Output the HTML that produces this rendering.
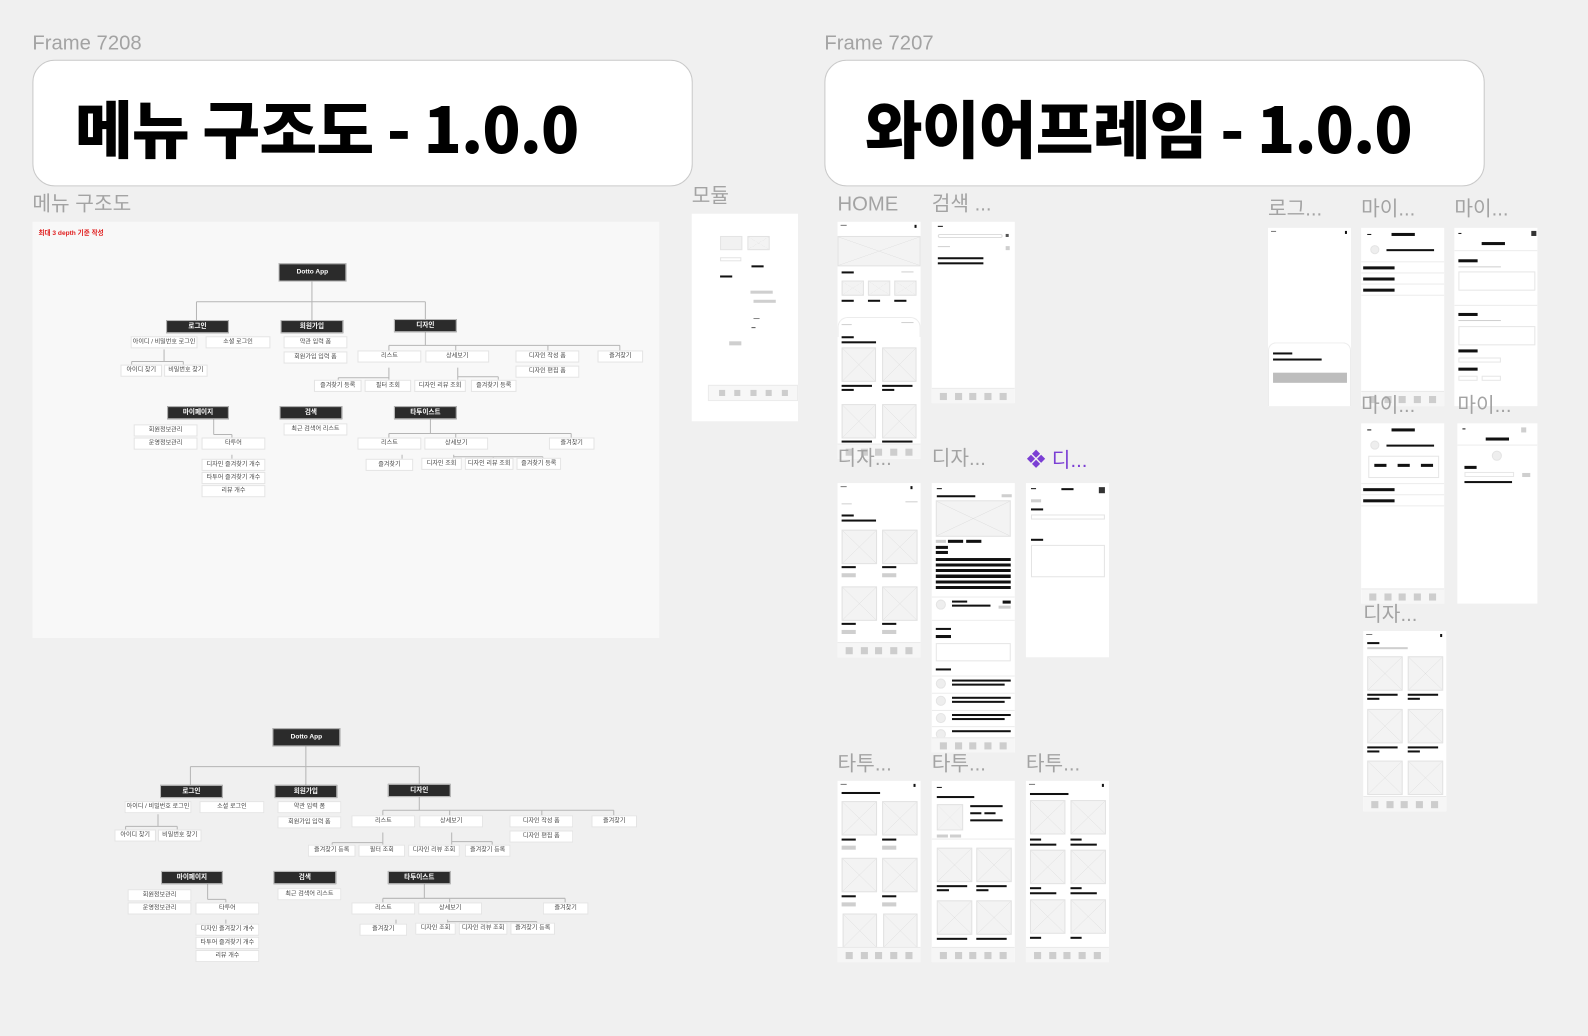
<!DOCTYPE html>
<html><head><meta charset="utf-8">
<style>
*{margin:0;padding:0;box-sizing:border-box}
body{width:1588px;height:1036px;background:#f0f0f0;position:relative;overflow:hidden;font-family:"Liberation Sans","Noto Sans CJK KR",sans-serif}
#wrap{position:absolute;left:0;top:0;width:1568px;height:1023px;transform:scale(1.01276);transform-origin:0 0}
.a{position:absolute}
.lbl{position:absolute;font-size:20px;color:#a3a3a3;white-space:nowrap;line-height:1}
.card{position:absolute;background:#fff;border:1px solid #c9c9c9;border-radius:22px}
.title{position:absolute;font-family:"Noto Sans CJK KR","Liberation Sans",sans-serif;font-weight:900;font-size:62px;color:#000;line-height:1;white-space:nowrap;letter-spacing:-0.8px}
.ph{position:absolute;background:#fff;overflow:hidden}
.b{position:absolute;background:#111;height:3px}
.g{position:absolute;background:#cfcfcf;height:2px}
.x{position:absolute;background:#f3f3f3;border:1px solid #e2e2e2;background-image:linear-gradient(to top right,transparent 49.3%,#dcdcdc 50%,transparent 50.7%),linear-gradient(to bottom right,transparent 49.3%,#dcdcdc 50%,transparent 50.7%)}
.nav{position:absolute;left:0;right:0;bottom:0;height:15px;background:#f6f6f6;border-top:1px solid #eaeaea;display:flex;justify-content:space-evenly;align-items:center}
.nav i{display:block;width:7px;height:7px;background:#cdcdcd}
.hl{position:absolute;left:0;right:0;height:1px;background:#ececec}
.av{position:absolute;border-radius:50%;background:#eee;border:1px solid #e4e4e4}
.dk{position:absolute;background:#2b2b2b;color:#fff;font-size:6.5px;font-weight:700;text-align:center;line-height:12px;height:13px;border:1px solid #bbb}
.wb{position:absolute;background:#fff;color:#444;font-size:6px;text-align:center;line-height:11px;height:12px;border:1px solid #e4e4e4;white-space:nowrap;overflow:hidden}
.dia{position:absolute;left:0;top:0;width:1588px;height:520px}
</style></head><body><div id="wrap">

<div class="lbl" style="left:32px;top:33px">Frame 7208</div>
<div class="lbl" style="left:814px;top:33px">Frame 7207</div>

<div class="card" style="left:32px;top:59px;width:652px;height:125px"></div>
<div class="title" style="left:74px;top:93px">메뉴 구조도 - 1.0.0</div>
<div class="card" style="left:814px;top:59px;width:652px;height:125px"></div>
<div class="title" style="left:854px;top:93px">와이어프레임 - 1.0.0</div>

<div class="lbl" style="left:32px;top:192px">메뉴 구조도</div>
<div class="a" style="left:32px;top:219px;width:619px;height:411px;background:#f8f8f8"></div>

<div class="dia" id="d1">
<div class="a" style="left:38px;top:224px;font-size:6.5px;color:#e02020;font-weight:700">최대 3 depth 기준 작성</div>
<svg class="a" style="left:0;top:0" width="700" height="520" fill="none" stroke="#b5b5b5" stroke-width="1">
<path d="M308 277V298M194 298H420M194 298V317M308 298V317M420 298V315"/>
<path d="M162 345V357M130 357H181M130 357V366M181 357V366"/>
<path d="M420 327V341M384 341H612M384 341V352M450 341V352M541 341V352M612 341V352"/>
<path d="M384 363V381M334 373H384M334 373V381"/>
<path d="M452 363V377M452 372H492M492 372V381"/>
<path d="M211 413V429M211 429H229M229 429V438M229 449V459"/>
<path d="M425 413V428M384 428H564M384 428V438M450 428V438M564 428V438"/>
<path d="M397 449V456M448 449V454M448 451H536M487 451V454M536 451V454"/>
</svg>
<div class="dk" style="left:275px;top:260px;width:67px;height:18px;line-height:16px">Dotto App</div>
<div class="dk" style="left:164px;top:316px;width:62px">로그인</div>
<div class="dk" style="left:277px;top:316px;width:62px">회원가입</div>
<div class="dk" style="left:389px;top:315px;width:62px">디자인</div>
<div class="dk" style="left:165px;top:401px;width:61px">마이페이지</div>
<div class="dk" style="left:276px;top:401px;width:62px">검색</div>
<div class="dk" style="left:389px;top:401px;width:62px">타투이스트</div>
<div class="wb" style="left:129px;top:332px;width:66px">아이디 / 비밀번호 로그인</div>
<div class="wb" style="left:203px;top:332px;width:64px">소셜 로그인</div>
<div class="wb" style="left:119px;top:360px;width:41px">아이디 찾기</div>
<div class="wb" style="left:162px;top:360px;width:43px">비밀번호 찾기</div>
<div class="wb" style="left:280px;top:332px;width:63px">약관 입력 폼</div>
<div class="wb" style="left:280px;top:347px;width:63px">회원가입 입력 폼</div>
<div class="wb" style="left:353px;top:346px;width:63px">리스트</div>
<div class="wb" style="left:420px;top:346px;width:63px">상세보기</div>
<div class="wb" style="left:509px;top:346px;width:63px">디자인 작성 폼</div>
<div class="wb" style="left:509px;top:361px;width:63px">디자인 편집 폼</div>
<div class="wb" style="left:590px;top:346px;width:45px">즐겨찾기</div>
<div class="wb" style="left:310px;top:375px;width:47px">즐겨찾기 등록</div>
<div class="wb" style="left:360px;top:375px;width:46px">필터 조회</div>
<div class="wb" style="left:409px;top:375px;width:51px">디자인 리뷰 조회</div>
<div class="wb" style="left:465px;top:375px;width:45px">즐겨찾기 등록</div>
<div class="wb" style="left:132px;top:419px;width:63px">회원정보관리</div>
<div class="wb" style="left:132px;top:432px;width:63px">운영정보관리</div>
<div class="wb" style="left:199px;top:432px;width:63px">타투어</div>
<div class="wb" style="left:199px;top:453px;width:63px">디자인 즐겨찾기 개수</div>
<div class="wb" style="left:199px;top:466px;width:63px">타투어 즐겨찾기 개수</div>
<div class="wb" style="left:199px;top:479px;width:63px">리뷰 개수</div>
<div class="wb" style="left:280px;top:418px;width:63px">최근 검색어 리스트</div>
<div class="wb" style="left:353px;top:432px;width:63px">리스트</div>
<div class="wb" style="left:419px;top:432px;width:63px">상세보기</div>
<div class="wb" style="left:542px;top:432px;width:45px">즐겨찾기</div>
<div class="wb" style="left:361px;top:453px;width:47px">즐겨찾기</div>
<div class="wb" style="left:416px;top:452px;width:40px">디자인 조회</div>
<div class="wb" style="left:459px;top:452px;width:48px">디자인 리뷰 조회</div>
<div class="wb" style="left:510px;top:452px;width:44px">즐겨찾기 등록</div>
</div>

<div class="dia" style="transform:translate(-6px,459px)">
<svg class="a" style="left:0;top:0" width="700" height="520" fill="none" stroke="#b5b5b5" stroke-width="1">
<path d="M308 277V298M194 298H420M194 298V317M308 298V317M420 298V315"/>
<path d="M162 345V357M130 357H181M130 357V366M181 357V366"/>
<path d="M420 327V341M384 341H612M384 341V352M450 341V352M541 341V352M612 341V352"/>
<path d="M384 363V381M334 373H384M334 373V381"/>
<path d="M452 363V377M452 372H492M492 372V381"/>
<path d="M211 413V429M211 429H229M229 429V438M229 449V459"/>
<path d="M425 413V428M384 428H564M384 428V438M450 428V438M564 428V438"/>
<path d="M397 449V456M448 449V454M448 451H536M487 451V454M536 451V454"/>
</svg>
<div class="dk" style="left:275px;top:260px;width:67px;height:18px;line-height:16px">Dotto App</div>
<div class="dk" style="left:164px;top:316px;width:62px">로그인</div>
<div class="dk" style="left:277px;top:316px;width:62px">회원가입</div>
<div class="dk" style="left:389px;top:315px;width:62px">디자인</div>
<div class="dk" style="left:165px;top:401px;width:61px">마이페이지</div>
<div class="dk" style="left:276px;top:401px;width:62px">검색</div>
<div class="dk" style="left:389px;top:401px;width:62px">타투이스트</div>
<div class="wb" style="left:129px;top:332px;width:66px">아이디 / 비밀번호 로그인</div>
<div class="wb" style="left:203px;top:332px;width:64px">소셜 로그인</div>
<div class="wb" style="left:119px;top:360px;width:41px">아이디 찾기</div>
<div class="wb" style="left:162px;top:360px;width:43px">비밀번호 찾기</div>
<div class="wb" style="left:280px;top:332px;width:63px">약관 입력 폼</div>
<div class="wb" style="left:280px;top:347px;width:63px">회원가입 입력 폼</div>
<div class="wb" style="left:353px;top:346px;width:63px">리스트</div>
<div class="wb" style="left:420px;top:346px;width:63px">상세보기</div>
<div class="wb" style="left:509px;top:346px;width:63px">디자인 작성 폼</div>
<div class="wb" style="left:509px;top:361px;width:63px">디자인 편집 폼</div>
<div class="wb" style="left:590px;top:346px;width:45px">즐겨찾기</div>
<div class="wb" style="left:310px;top:375px;width:47px">즐겨찾기 등록</div>
<div class="wb" style="left:360px;top:375px;width:46px">필터 조회</div>
<div class="wb" style="left:409px;top:375px;width:51px">디자인 리뷰 조회</div>
<div class="wb" style="left:465px;top:375px;width:45px">즐겨찾기 등록</div>
<div class="wb" style="left:132px;top:419px;width:63px">회원정보관리</div>
<div class="wb" style="left:132px;top:432px;width:63px">운영정보관리</div>
<div class="wb" style="left:199px;top:432px;width:63px">타투어</div>
<div class="wb" style="left:199px;top:453px;width:63px">디자인 즐겨찾기 개수</div>
<div class="wb" style="left:199px;top:466px;width:63px">타투어 즐겨찾기 개수</div>
<div class="wb" style="left:199px;top:479px;width:63px">리뷰 개수</div>
<div class="wb" style="left:280px;top:418px;width:63px">최근 검색어 리스트</div>
<div class="wb" style="left:353px;top:432px;width:63px">리스트</div>
<div class="wb" style="left:419px;top:432px;width:63px">상세보기</div>
<div class="wb" style="left:542px;top:432px;width:45px">즐겨찾기</div>
<div class="wb" style="left:361px;top:453px;width:47px">즐겨찾기</div>
<div class="wb" style="left:416px;top:452px;width:40px">디자인 조회</div>
<div class="wb" style="left:459px;top:452px;width:48px">디자인 리뷰 조회</div>
<div class="wb" style="left:510px;top:452px;width:44px">즐겨찾기 등록</div>
</div>

<div class="lbl" style="left:683px;top:184px">모듈</div>
<div class="ph" style="left:683px;top:211px;width:105px;height:205px">
 <div class="a" style="left:28px;top:22px;width:22px;height:14px;background:#f1f1f1;border:1px solid #e4e4e4"></div>
 <div class="x" style="left:55px;top:22px;width:22px;height:14px"></div>
 <div class="a" style="left:28px;top:43px;width:21px;height:4px;border:1px solid #e4e4e4"></div>
 <div class="b" style="left:59px;top:51px;width:12px;height:2px"></div>
 <div class="b" style="left:28px;top:61px;width:12px;height:2px"></div>
 <div class="g" style="left:58px;top:76px;width:22px;height:3px"></div>
 <div class="g" style="left:61px;top:85px;width:22px;height:3px"></div>
 <div class="g" style="left:61px;top:103px;width:6px;height:1px;background:#888"></div>
 <div class="g" style="left:59px;top:112px;width:4px;height:1px;background:#555"></div>
 <div class="g" style="left:37px;top:126px;width:12px;height:4px"></div>
 <div class="a" style="left:16px;top:169px;width:89px;height:16px;background:#f7f7f7;border:1px solid #ebebeb;display:flex;justify-content:space-evenly;align-items:center"><i style="width:6px;height:6px;background:#cdcdcd"></i><i style="width:6px;height:6px;background:#cdcdcd"></i><i style="width:6px;height:6px;background:#cdcdcd"></i><i style="width:6px;height:6px;background:#cdcdcd"></i><i style="width:6px;height:6px;background:#cdcdcd"></i></div>
</div>

<div class="lbl" style="left:827px;top:192px">HOME</div>
<div class="ph" style="left:827px;top:219px;width:82px;height:234px">
 <div class="g" style="left:3px;top:3px;width:6px;height:1px;background:#777"></div>
 <div class="b" style="left:76px;top:3px;width:2px;height:3px"></div>
 <div class="x" style="left:0;top:14px;width:82px;height:30px"></div>
 <div class="b" style="left:4px;top:49px;width:12px;height:2px"></div>
 <div class="g" style="left:63px;top:49px;width:12px;height:1px"></div>
 <div class="x" style="left:4px;top:58px;width:22px;height:15px"></div>
 <div class="x" style="left:30px;top:58px;width:22px;height:15px"></div>
 <div class="x" style="left:56px;top:58px;width:22px;height:15px"></div>
 <div class="b" style="left:4px;top:77px;width:12px;height:2px"></div>
 <div class="b" style="left:30px;top:77px;width:12px;height:2px"></div>
 <div class="b" style="left:56px;top:77px;width:12px;height:2px"></div>
 <div class="a" style="left:0;top:94px;width:82px;height:20px;border:1px solid #ececec;border-bottom:none;border-radius:10px 10px 0 0"></div>
 <div class="g" style="left:4px;top:101px;width:10px;height:1px"></div>
 <div class="g" style="left:63px;top:99px;width:12px;height:1px"></div>
 <div class="b" style="left:4px;top:113px;width:12px;height:2px"></div>
 <div class="b" style="left:4px;top:118px;width:34px;height:2px"></div>
 <div class="x" style="left:4px;top:124px;width:34px;height:34px"></div>
 <div class="x" style="left:44px;top:124px;width:34px;height:34px"></div>
 <div class="b" style="left:4px;top:161px;width:30px;height:2px"></div>
 <div class="b" style="left:44px;top:161px;width:30px;height:2px"></div>
 <div class="b" style="left:4px;top:165px;width:12px;height:2px"></div>
 <div class="b" style="left:44px;top:165px;width:12px;height:2px"></div>
 <div class="x" style="left:4px;top:180px;width:34px;height:34px"></div>
 <div class="x" style="left:44px;top:180px;width:34px;height:34px"></div>
 <div class="b" style="left:4px;top:216px;width:30px;height:2px"></div>
 <div class="b" style="left:44px;top:216px;width:30px;height:2px"></div>
 <div class="nav"><i></i><i></i><i></i><i></i><i></i></div>
</div>

<div class="lbl" style="left:920px;top:192px">검색 ...</div>
<div class="ph" style="left:920px;top:219px;width:82px;height:179px">
 <div class="b" style="left:6px;top:4px;width:5px;height:1px"></div>
 <div class="a" style="left:6px;top:12px;width:64px;height:4px;border:1px solid #ddd;border-radius:2px"></div>
 <div class="b" style="left:73px;top:12px;width:3px;height:3px;background:#555"></div>
 <div class="g" style="left:6px;top:24px;width:12px;height:1px"></div>
 <div class="g" style="left:73px;top:24px;width:4px;height:4px"></div>
 <div class="b" style="left:6px;top:35px;width:45px;height:2px"></div>
 <div class="b" style="left:6px;top:40px;width:45px;height:2px"></div>
 <div class="nav"><i></i><i></i><i></i><i></i><i></i></div>
</div>

<div class="lbl" style="left:827px;top:443px">디자...</div>
<div class="lbl" style="left:920px;top:443px">디자...</div>
<div class="lbl" style="left:1013px;top:443px;color:#7b3fd4">
 <svg width="20" height="20" viewBox="0 0 20 20" style="vertical-align:-2px"><g fill="#7b3fd4"><path d="M10 1l4 4-4 4-4-4z"/><path d="M10 11l4 4-4 4-4-4z"/><path d="M5 6l4 4-4 4-4-4z"/><path d="M15 6l4 4-4 4-4-4z"/></g></svg> 디...</div>

<div class="ph" style="left:827px;top:477px;width:82px;height:172px">
 <div class="g" style="left:3px;top:3px;width:6px;height:1px;background:#777"></div>
 <div class="b" style="left:72px;top:3px;width:2px;height:3px"></div>
 <div class="g" style="left:4px;top:20px;width:10px;height:1px"></div>
 <div class="g" style="left:67px;top:18px;width:12px;height:1px"></div>
 <div class="b" style="left:4px;top:31px;width:12px;height:2px"></div>
 <div class="b" style="left:4px;top:36px;width:34px;height:2px"></div>
 <div class="x" style="left:4px;top:46px;width:35px;height:34px"></div>
 <div class="x" style="left:44px;top:46px;width:35px;height:34px"></div>
 <div class="b" style="left:4px;top:82px;width:14px;height:2px"></div>
 <div class="b" style="left:44px;top:82px;width:14px;height:2px"></div>
 <div class="g" style="left:4px;top:89px;width:14px;height:4px"></div>
 <div class="g" style="left:44px;top:89px;width:14px;height:4px"></div>
 <div class="x" style="left:4px;top:102px;width:35px;height:34px"></div>
 <div class="x" style="left:44px;top:102px;width:35px;height:34px"></div>
 <div class="b" style="left:4px;top:138px;width:14px;height:2px"></div>
 <div class="b" style="left:44px;top:138px;width:14px;height:2px"></div>
 <div class="g" style="left:4px;top:145px;width:14px;height:4px"></div>
 <div class="g" style="left:44px;top:145px;width:14px;height:4px"></div>
 <div class="nav"><i></i><i></i><i></i><i></i><i></i></div>
</div>

<div class="ph" style="left:920px;top:477px;width:82px;height:266px">
 <div class="b" style="left:5px;top:5px;width:5px;height:1px"></div>
 <div class="b" style="left:5px;top:12px;width:38px;height:2px"></div>
 <div class="g" style="left:69px;top:11px;width:10px;height:3px"></div>
 <div class="x" style="left:4px;top:17px;width:74px;height:36px"></div>
 <div class="g" style="left:4px;top:56px;width:10px;height:3px"></div>
 <div class="b" style="left:16px;top:56px;width:15px;height:3px"></div>
 <div class="b" style="left:34px;top:56px;width:15px;height:3px"></div>
 <div class="b" style="left:4px;top:62px;width:12px;height:3px"></div>
 <div class="b" style="left:4px;top:67px;width:12px;height:3px"></div>
 <div class="b" style="left:4px;top:74px;width:74px;height:33px;background:repeating-linear-gradient(#111 0 3px,#fff 3px 5.5px)"></div>
 <div class="hl" style="top:112px"></div>
 <div class="av" style="left:4px;top:115px;width:10px;height:10px"></div>
 <div class="b" style="left:20px;top:116px;width:15px;height:2px"></div>
 <div class="b" style="left:20px;top:120px;width:38px;height:2px"></div>
 <div class="b" style="left:70px;top:116px;width:8px;height:3px"></div>
 <div class="g" style="left:66px;top:121px;width:12px;height:3px"></div>
 <div class="hl" style="top:135px"></div>
 <div class="b" style="left:4px;top:143px;width:15px;height:2px"></div>
 <div class="b" style="left:4px;top:150px;width:15px;height:3px"></div>
 <div class="a" style="left:4px;top:158px;width:74px;height:18px;border:1px solid #e6e6e6"></div>
 <div class="b" style="left:4px;top:183px;width:15px;height:2px"></div>
 <div class="hl" style="top:190px"></div>
 <div class="av" style="left:4px;top:193px;width:10px;height:10px"></div><div class="b" style="left:20px;top:194px;width:58px;height:2px"></div><div class="b" style="left:20px;top:198px;width:52px;height:2px"></div>
 <div class="hl" style="top:207px"></div>
 <div class="av" style="left:4px;top:210px;width:10px;height:10px"></div><div class="b" style="left:20px;top:211px;width:58px;height:2px"></div><div class="b" style="left:20px;top:215px;width:52px;height:2px"></div>
 <div class="hl" style="top:224px"></div>
 <div class="av" style="left:4px;top:227px;width:10px;height:10px"></div><div class="b" style="left:20px;top:228px;width:58px;height:2px"></div><div class="b" style="left:20px;top:232px;width:52px;height:2px"></div>
 <div class="hl" style="top:240px"></div>
 <div class="av" style="left:4px;top:243px;width:10px;height:10px"></div><div class="b" style="left:20px;top:244px;width:58px;height:2px"></div>
 <div class="nav"><i></i><i></i><i></i><i></i><i></i></div>
</div>

<div class="ph" style="left:1013px;top:477px;width:82px;height:172px">
 <div class="b" style="left:5px;top:5px;width:5px;height:1px"></div>
 <div class="b" style="left:35px;top:5px;width:12px;height:2px"></div>
 <div class="b" style="left:72px;top:4px;width:6px;height:6px;background:#333"></div>
 <div class="g" style="left:5px;top:16px;width:10px;height:3px"></div>
 <div class="b" style="left:5px;top:25px;width:12px;height:2px"></div>
 <div class="a" style="left:5px;top:31px;width:73px;height:5px;border:1px solid #e4e4e4"></div>
 <div class="b" style="left:5px;top:55px;width:12px;height:2px"></div>
 <div class="a" style="left:5px;top:61px;width:73px;height:32px;border:1px solid #e4e4e4"></div>
</div>

<div class="lbl" style="left:827px;top:745px">타투...</div>
<div class="lbl" style="left:920px;top:745px">타투...</div>
<div class="lbl" style="left:1013px;top:745px">타투...</div>

<div class="ph" style="left:827px;top:771px;width:82px;height:179px">
 <div class="g" style="left:3px;top:3px;width:6px;height:1px;background:#777"></div>
 <div class="b" style="left:75px;top:3px;width:2px;height:3px"></div>
 <div class="b" style="left:4px;top:11px;width:38px;height:2px"></div>
 <div class="x" style="left:4px;top:20px;width:35px;height:34px"></div><div class="x" style="left:44px;top:20px;width:35px;height:34px"></div>
 <div class="b" style="left:4px;top:57px;width:14px;height:2px"></div><div class="b" style="left:44px;top:57px;width:14px;height:2px"></div>
 <div class="g" style="left:4px;top:64px;width:14px;height:4px"></div><div class="g" style="left:44px;top:64px;width:14px;height:4px"></div>
 <div class="x" style="left:4px;top:76px;width:35px;height:34px"></div><div class="x" style="left:44px;top:76px;width:35px;height:34px"></div>
 <div class="b" style="left:4px;top:113px;width:14px;height:2px"></div><div class="b" style="left:44px;top:113px;width:14px;height:2px"></div>
 <div class="g" style="left:4px;top:120px;width:14px;height:4px"></div><div class="g" style="left:44px;top:120px;width:14px;height:4px"></div>
 <div class="x" style="left:5px;top:131px;width:34px;height:34px"></div><div class="x" style="left:45px;top:131px;width:34px;height:34px"></div>
 <div class="nav"><i></i><i></i><i></i><i></i><i></i></div>
</div>

<div class="ph" style="left:920px;top:771px;width:82px;height:179px">
 <div class="b" style="left:5px;top:6px;width:5px;height:1px"></div>
 <div class="b" style="left:5px;top:15px;width:37px;height:2px"></div>
 <div class="x" style="left:5px;top:23px;width:26px;height:26px"></div>
 <div class="b" style="left:38px;top:24px;width:32px;height:2px"></div>
 <div class="b" style="left:38px;top:31px;width:11px;height:2px"></div><div class="b" style="left:52px;top:31px;width:11px;height:2px"></div>
 <div class="b" style="left:38px;top:38px;width:32px;height:2px"></div>
 <div class="g" style="left:5px;top:53px;width:11px;height:3px"></div><div class="g" style="left:18px;top:53px;width:11px;height:3px"></div>
 <div class="hl" style="top:57px"></div>
 <div class="x" style="left:5px;top:66px;width:35px;height:34px"></div><div class="x" style="left:44px;top:66px;width:35px;height:34px"></div>
 <div class="b" style="left:5px;top:103px;width:30px;height:2px"></div><div class="b" style="left:44px;top:103px;width:30px;height:2px"></div>
 <div class="b" style="left:5px;top:107px;width:12px;height:2px"></div><div class="b" style="left:44px;top:107px;width:12px;height:2px"></div>
 <div class="x" style="left:5px;top:118px;width:35px;height:34px"></div><div class="x" style="left:44px;top:118px;width:35px;height:34px"></div>
 <div class="b" style="left:5px;top:155px;width:30px;height:2px"></div><div class="b" style="left:44px;top:155px;width:30px;height:2px"></div>
 <div class="nav"><i></i><i></i><i></i><i></i><i></i></div>
</div>

<div class="ph" style="left:1013px;top:771px;width:82px;height:179px">
 <div class="g" style="left:3px;top:3px;width:6px;height:1px;background:#777"></div>
 <div class="b" style="left:75px;top:3px;width:2px;height:3px"></div>
 <div class="b" style="left:4px;top:12px;width:38px;height:2px"></div>
 <div class="x" style="left:4px;top:19px;width:35px;height:34px"></div><div class="x" style="left:44px;top:19px;width:35px;height:34px"></div>
 <div class="b" style="left:4px;top:57px;width:11px;height:2px"></div><div class="b" style="left:44px;top:57px;width:11px;height:2px"></div>
 <div class="b" style="left:4px;top:62px;width:26px;height:2px"></div><div class="b" style="left:44px;top:62px;width:26px;height:2px"></div>
 <div class="x" style="left:4px;top:68px;width:35px;height:34px"></div><div class="x" style="left:44px;top:68px;width:35px;height:34px"></div>
 <div class="b" style="left:4px;top:105px;width:11px;height:2px"></div><div class="b" style="left:44px;top:105px;width:11px;height:2px"></div>
 <div class="b" style="left:4px;top:110px;width:26px;height:2px"></div><div class="b" style="left:44px;top:110px;width:26px;height:2px"></div>
 <div class="x" style="left:4px;top:117px;width:35px;height:34px"></div><div class="x" style="left:44px;top:117px;width:35px;height:34px"></div>
 <div class="b" style="left:4px;top:154px;width:11px;height:2px"></div><div class="b" style="left:44px;top:154px;width:11px;height:2px"></div>
 <div class="nav"><i></i><i></i><i></i><i></i><i></i></div>
</div>

<div class="lbl" style="left:1252px;top:197px">로그...</div>
<div class="lbl" style="left:1344px;top:197px">마이...</div>
<div class="lbl" style="left:1436px;top:197px">마이...</div>

<div class="ph" style="left:1252px;top:225px;width:82px;height:176px">
 <div class="g" style="left:3px;top:3px;width:5px;height:1px;background:#777"></div>
 <div class="b" style="left:76px;top:3px;width:2px;height:3px"></div>
 <div class="a" style="left:0;top:113px;width:82px;height:63px;border:1px solid #ececec;border-bottom:none;border-radius:8px 8px 0 0"></div>
 <div class="b" style="left:5px;top:123px;width:19px;height:2px"></div>
 <div class="b" style="left:5px;top:129px;width:48px;height:2px"></div>
 <div class="g" style="left:5px;top:143px;width:73px;height:10px;background:#bdbdbd"></div>
</div>

<div class="ph" style="left:1344px;top:225px;width:82px;height:176px">
 <div class="b" style="left:6px;top:6px;width:4px;height:1px"></div>
 <div class="b" style="left:30px;top:5px;width:23px;height:3px"></div>
 <div class="av" style="left:9px;top:17px;width:9px;height:9px"></div>
 <div class="b" style="left:25px;top:21px;width:47px;height:2px"></div>
 <div class="hl" style="top:33px"></div>
 <div class="b" style="left:2px;top:38px;width:31px;height:3px"></div>
 <div class="hl" style="top:44px"></div>
 <div class="b" style="left:2px;top:49px;width:31px;height:3px"></div>
 <div class="hl" style="top:55px"></div>
 <div class="b" style="left:2px;top:60px;width:31px;height:3px"></div>
 <div class="hl" style="top:66px"></div>
 <div class="nav"><i></i><i></i><i></i><i></i><i></i></div>
</div>

<div class="ph" style="left:1436px;top:225px;width:82px;height:176px">
 <div class="b" style="left:4px;top:5px;width:3px;height:1px"></div>
 <div class="b" style="left:27px;top:14px;width:23px;height:3px"></div>
 <div class="b" style="left:76px;top:3px;width:5px;height:5px;background:#333"></div>
 <div class="hl" style="top:22px"></div>
 <div class="b" style="left:4px;top:31px;width:19px;height:3px"></div>
 <div class="g" style="left:4px;top:38px;width:42px;height:1px"></div>
 <div class="a" style="left:4px;top:43px;width:76px;height:19px;border:1px solid #e6e6e6"></div>
 <div class="hl" style="top:76px"></div>
 <div class="b" style="left:4px;top:84px;width:19px;height:3px"></div>
 <div class="g" style="left:4px;top:91px;width:42px;height:1px"></div>
 <div class="a" style="left:4px;top:97px;width:76px;height:19px;border:1px solid #e6e6e6"></div>
 <div class="b" style="left:4px;top:120px;width:19px;height:3px"></div>
 <div class="a" style="left:4px;top:128px;width:42px;height:5px;border:1px solid #e6e6e6"></div>
 <div class="b" style="left:4px;top:138px;width:19px;height:3px"></div>
 <div class="a" style="left:4px;top:146px;width:19px;height:5px;border:1px solid #e6e6e6"></div>
 <div class="a" style="left:27px;top:146px;width:19px;height:5px;border:1px solid #e6e6e6"></div>
</div>

<div class="lbl" style="left:1344px;top:391px">마이...</div>
<div class="lbl" style="left:1439px;top:391px">마이...</div>

<div class="ph" style="left:1344px;top:418px;width:82px;height:178px">
 <div class="b" style="left:6px;top:6px;width:4px;height:1px"></div>
 <div class="b" style="left:30px;top:5px;width:23px;height:3px"></div>
 <div class="av" style="left:9px;top:17px;width:9px;height:9px"></div>
 <div class="b" style="left:25px;top:21px;width:47px;height:2px"></div>
 <div class="a" style="left:7px;top:32px;width:70px;height:22px;border:1px solid #e6e6e6"></div>
 <div class="b" style="left:13px;top:40px;width:12px;height:3px"></div><div class="b" style="left:36px;top:40px;width:12px;height:3px"></div><div class="b" style="left:59px;top:40px;width:12px;height:3px"></div>
 <div class="hl" style="top:59px"></div>
 <div class="b" style="left:2px;top:64px;width:31px;height:3px"></div>
 <div class="hl" style="top:70px"></div>
 <div class="b" style="left:2px;top:75px;width:31px;height:3px"></div>
 <div class="hl" style="top:81px"></div>
 <div class="nav"><i></i><i></i><i></i><i></i><i></i></div>
</div>

<div class="ph" style="left:1439px;top:418px;width:79px;height:178px">
 <div class="b" style="left:5px;top:5px;width:3px;height:1px"></div>
 <div class="g" style="left:63px;top:4px;width:5px;height:5px"></div>
 <div class="b" style="left:28px;top:14px;width:23px;height:3px"></div>
 <div class="hl" style="top:21px"></div>
 <div class="av" style="left:34px;top:27px;width:10px;height:10px"></div>
 <div class="b" style="left:7px;top:42px;width:12px;height:3px"></div>
 <div class="a" style="left:7px;top:48px;width:49px;height:5px;border:1px solid #e6e6e6"></div>
 <div class="g" style="left:64px;top:49px;width:8px;height:4px"></div>
 <div class="b" style="left:7px;top:57px;width:47px;height:2px"></div>
</div>

<div class="lbl" style="left:1346px;top:597px">디자...</div>
<div class="ph" style="left:1346px;top:623px;width:82px;height:178px">
 <div class="g" style="left:3px;top:3px;width:6px;height:1px;background:#777"></div>
 <div class="b" style="left:76px;top:3px;width:2px;height:3px"></div>
 <div class="b" style="left:4px;top:11px;width:12px;height:2px"></div>
 <div class="g" style="left:4px;top:16px;width:40px;height:2px"></div>
 <div class="x" style="left:4px;top:25px;width:35px;height:34px"></div><div class="x" style="left:44px;top:25px;width:35px;height:34px"></div>
 <div class="b" style="left:4px;top:62px;width:30px;height:2px"></div><div class="b" style="left:44px;top:62px;width:30px;height:2px"></div>
 <div class="b" style="left:4px;top:66px;width:12px;height:2px"></div><div class="b" style="left:44px;top:66px;width:12px;height:2px"></div>
 <div class="x" style="left:4px;top:77px;width:35px;height:34px"></div><div class="x" style="left:44px;top:77px;width:35px;height:34px"></div>
 <div class="b" style="left:4px;top:114px;width:30px;height:2px"></div><div class="b" style="left:44px;top:114px;width:30px;height:2px"></div>
 <div class="b" style="left:4px;top:118px;width:12px;height:2px"></div><div class="b" style="left:44px;top:118px;width:12px;height:2px"></div>
 <div class="x" style="left:4px;top:128px;width:35px;height:34px"></div><div class="x" style="left:44px;top:128px;width:35px;height:34px"></div>
 <div class="nav"><i></i><i></i><i></i><i></i><i></i></div>
</div>

</div></body></html>
